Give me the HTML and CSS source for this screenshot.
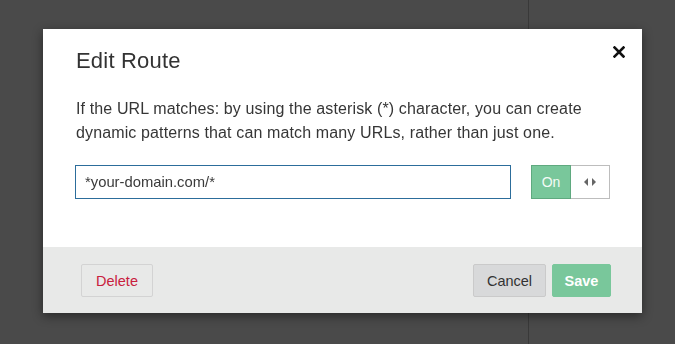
FILE: index.html
```html
<!DOCTYPE html>
<html lang="en">
<head>
    <meta charset="UTF-8">
    <meta name="viewport" content="width=device-width, initial-scale=1.0">
    <title>Edit Route</title>
    <link rel="stylesheet" href="styles.css">
</head>
<body>
    <div class="page">
        <div class="main"></div>
        <div class="side"></div>
    </div>

    <div class="overlay">
        <div class="modal">
            <div class="modal-body">
                <h2 class="modal-title">Edit Route</h2>
                <button class="close" aria-label="Close">
                    <svg width="12" height="12" viewBox="0 0 12 12">
                        <path d="M1.5 1.5 L10.5 10.5 M10.5 1.5 L1.5 10.5" stroke="#111" stroke-width="2.6" stroke-linecap="square"/>
                    </svg>
                </button>
                <p class="hint">If the URL matches: by using the asterisk (*) character, you can create dynamic patterns that can match many URLs, rather than just one.</p>
                <div class="route-row">
                    <input type="text" class="route-input" value="*your-domain.com/*">
                    <div class="toggle">
                        <span class="toggle-on">On</span>
                        <span class="toggle-handle">
                            <svg width="12" height="8" viewBox="0 0 12 8">
                                <path d="M4 0 L0 4 L4 8 Z M8 0 L12 4 L8 8 Z" fill="#666"/>
                            </svg>
                        </span>
                    </div>
                </div>
            </div>
            <div class="modal-footer">
                <button class="btn delete">Delete</button>
                <div class="actions">
                    <button class="btn cancel">Cancel</button>
                    <button class="btn save">Save</button>
                </div>
            </div>
        </div>
    </div>
</body>
</html>
```

FILE: styles.css
```css
* { box-sizing: border-box; }

body {
    margin: 0;
    font-family: 'Liberation Sans', Arial, sans-serif;
    background: #4a4a4a;
    color: #333;
}

.page {
    display: flex;
    height: 100vh;
}
.main {
    width: 529px;
    border-right: 1px solid #393939;
}
.side { flex: 1; }

.overlay {
    position: fixed;
    top: 0;
    left: 0;
    right: 0;
    bottom: 0;
    padding: 29px 0 0 43px;
}

.modal {
    width: 599px;
    background: #fff;
    box-shadow: 0 3px 10px rgba(0, 0, 0, 0.45);
}

.modal-body {
    position: relative;
    padding: 18px 32px 48px 32px;
}
.modal-title {
    margin: 0 0 22px 1px;
    font-size: 22px;
    line-height: 28px;
    font-weight: normal;
    letter-spacing: 0.2px;
    color: #333;
}
.close {
    position: absolute;
    top: 17px;
    right: 17px;
    padding: 0;
    border: none;
    background: none;
    width: 12px;
    height: 12px;
    display: flex;
}
.hint {
    margin: 0 0 20px 1px;
    font-size: 16px;
    line-height: 24px;
    letter-spacing: 0.13px;
    color: #363636;
}

.route-row {
    display: flex;
    align-items: center;
    gap: 20px;
}
.route-input {
    width: 436px;
    height: 34px;
    border: 1px solid #2c6d9b;
    padding: 0 9px;
    font-family: inherit;
    font-size: 14.8px;
    color: #3a3a3a;
    outline: none;
}
.toggle {
    display: flex;
    height: 34px;
}
.toggle-on {
    width: 40px;
    background: #79c79b;
    border: 1px solid #5fa97f;
    color: #f4fbf6;
    font-size: 14px;
    display: flex;
    align-items: center;
    justify-content: center;
}
.toggle-handle {
    width: 39px;
    border: 1px solid #bdbdbd;
    border-left: none;
    display: flex;
    align-items: center;
    justify-content: center;
}

.modal-footer {
    background: #e8e9e8;
    padding: 17px 31px 16px 38px;
    display: flex;
    justify-content: space-between;
    align-items: center;
}
.actions {
    display: flex;
    gap: 6px;
}

.btn {
    height: 33px;
    font-family: inherit;
    font-size: 14.5px;
    border-radius: 2px;
    cursor: pointer;
}
.delete {
    width: 72px;
    background: transparent;
    border: 1px solid #d3d3d3;
    color: #c9203d;
}
.cancel {
    width: 73px;
    background: #d8d9da;
    border: 1px solid #cacaca;
    color: #333;
}
.save {
    width: 59px;
    background: #79c79b;
    border: 1px solid #79c79b;
    color: #fff;
    font-weight: bold;
}
```
